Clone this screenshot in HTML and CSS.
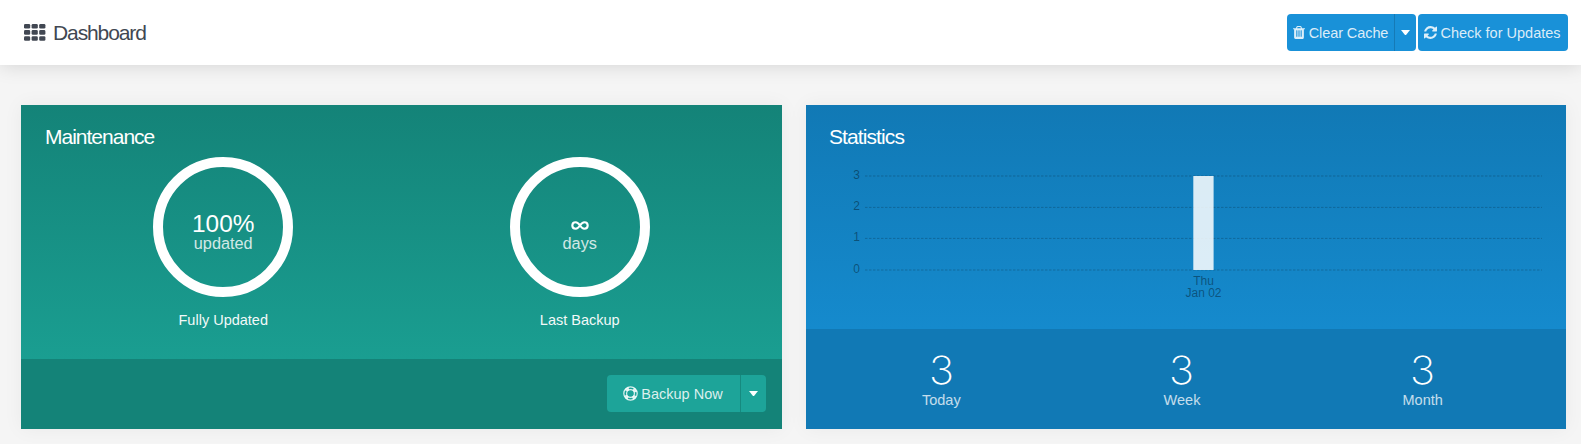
FILE: index.html
```html
<!DOCTYPE html>
<html lang="en">
<head>
<meta charset="utf-8">
<title>Dashboard</title>
<link rel="stylesheet" href="styles.css">
</head>
<body>
<header class="topbar">
  <h1 class="page-title">
    <svg class="icon-grid" width="22" height="17" viewBox="0 0 22 17"><g fill="currentColor"><rect x="0" y="0" width="6.2" height="4.6" rx="1.3"/><rect x="7.6" y="0" width="6.2" height="4.6" rx="1.3"/><rect x="15.2" y="0" width="6.2" height="4.6" rx="1.3"/><rect x="0" y="6.1" width="6.2" height="4.6" rx="1.3"/><rect x="7.6" y="6.1" width="6.2" height="4.6" rx="1.3"/><rect x="15.2" y="6.1" width="6.2" height="4.6" rx="1.3"/><rect x="0" y="12.2" width="6.2" height="4.6" rx="1.3"/><rect x="7.6" y="12.2" width="6.2" height="4.6" rx="1.3"/><rect x="15.2" y="12.2" width="6.2" height="4.6" rx="1.3"/></g></svg>
    <span>Dashboard</span>
  </h1>
  <div class="actions">
    <div class="group">
      <button class="btn btn-clear">
        <svg width="12" height="13" viewBox="0 0 1408 1536"><path fill="currentColor" d="M512 1248V544q0-32-32-32h-64q-32 0-32 32v704q0 32 32 32h64q32 0 32-32zm256 0V544q0-32-32-32h-64q-32 0-32 32v704q0 32 32 32h64q32 0 32-32zm256 0V544q0-32-32-32h-64q-32 0-32 32v704q0 32 32 32h64q32 0 32-32zM480 256h448l-48-117q-7-9-17-11H546q-10 2-17 11zm928 32v64q0 32-32 32h-96v948q0 83-47 143.500t-113 60.500H288q-66 0-113-58.500T128 1336V384H32q-32 0-32-32v-64q0-32 32-32h309l70-167q15-37 54-63t79-26h320q40 0 79 26t54 63l70 167h309q32 0 32 32z"/></svg>
        <span>Clear Cache</span>
      </button>
      <button class="btn btn-caret" aria-label="Clear cache options"><i class="caret"></i></button>
    </div>
    <button class="btn btn-check">
      <svg width="13" height="13" viewBox="0 0 1536 1536"><path fill="currentColor" d="M1511 928q0 5-1 7-64 268-268 434.500T764 1536q-146 0-282.500-55T238 1324l-129 129q-19 19-45 19t-45-19-19-45V960q0-26 19-45t45-19h448q26 0 45 19t19 45-19 45l-137 137q71 66 161 102t187 36q134 0 250-65t186-179q11-17 53-117 8-23 30-23h192q13 0 22.500 9.500t9.500 22.500zm25-800v448q0 26-19 45t-45 19h-448q-26 0-45-19t-19-45 19-45l138-138Q969 256 768 256q-134 0-250 65T332 500q-11 17-53 117-8 23-30 23H50q-13 0-22.500-9.500T18 608v-7q65-268 270-434.500T768 0q146 0 284 55.500T1297 212l130-129q19-19 45-19t45 19 19 45z"/></svg>
      <span>Check for Updates</span>
    </button>
  </div>
</header>
<main class="cards">
  <section class="card maintenance">
    <div class="card-main">
      <h2>Maintenance</h2>
      <div class="rings">
        <div class="ring-item">
          <div class="ring"><b>100%</b><span>updated</span></div>
          <p>Fully Updated</p>
        </div>
        <div class="ring-item">
          <div class="ring">
            <b><svg width="18" height="9" viewBox="0 0 18 9"><path d="M9 4.500C7.300 2 6.200 1.300 4.700 1.300C2.700 1.300 1.300 2.700 1.300 4.500S2.700 7.700 4.700 7.700C6.200 7.700 7.300 7 9 4.500C10.700 2 11.800 1.300 13.300 1.300C15.300 1.300 16.700 2.700 16.700 4.500S15.300 7.700 13.300 7.700C11.800 7.700 10.700 7 9 4.500Z" fill="none" stroke="currentColor" stroke-width="2.100"/></svg></b>
            <span>days</span>
          </div>
          <p>Last Backup</p>
        </div>
      </div>
    </div>
    <footer class="backup-bar">
      <div class="group">
        <button class="btn btn-backup">
          <svg width="15" height="15" viewBox="0 0 15 15" fill="none" stroke="currentColor"><circle cx="7.500" cy="7.500" r="6.700" stroke-width="1.200"/><circle cx="7.500" cy="7.500" r="3.900" stroke-width="1.200"/><circle cx="7.500" cy="7.500" r="5.250" stroke-width="3" stroke-dasharray="3.600 4.647" stroke-dashoffset="-2.320"/></svg>
          <span>Backup Now</span>
        </button>
        <button class="btn btn-caret" aria-label="Backup options"><i class="caret"></i></button>
      </div>
    </footer>
  </section>
  <section class="card statistics">
    <div class="card-main">
      <h2>Statistics</h2>
      <svg class="chart" width="713" height="150" viewBox="830 157 713 150">
        <g class="grid-lines"><path d="M865 176H1542M865 207.400H1542M865 238.400H1542M865 270H1542"/></g>
        <rect class="bar" x="1193.300" y="176" width="20.300" height="94"/>
        <g class="axis" text-anchor="end"><text x="860" y="179">3</text><text x="860" y="210">2</text><text x="860" y="241">1</text><text x="860" y="273">0</text></g>
        <g class="axis" text-anchor="middle"><text x="1203.500" y="285">Thu</text><text x="1203.500" y="297">Jan 02</text></g>
      </svg>
    </div>
    <footer class="totals">
      <div><b>3</b><span>Today</span></div>
      <div><b>3</b><span>Week</span></div>
      <div><b>3</b><span>Month</span></div>
    </footer>
  </section>
</main>
</body>
</html>
```

FILE: styles.css
```css
* { box-sizing: border-box; }
body {
  margin: 0;
  height: 444px;
  overflow: hidden;
  background: #f5f5f5;
  font: 14.5px/20px "Liberation Sans", Arial, sans-serif;
}
h1, h2, p { margin: 0; font-weight: 400; }
h1, h2 { font-size: 21px; line-height: 26px; letter-spacing: -1px; }
h1 { letter-spacing: -1.1px; }
b { font-weight: 400; }
svg { display: block; flex: none; }

.topbar {
  height: 65px;
  padding: 0 13px 0 24px;
  display: flex;
  align-items: center;
  justify-content: space-between;
  background: #fff;
  box-shadow: 0 0 19px rgba(0, 0, 0, .15);
}
.page-title { display: flex; align-items: center; gap: 7px; color: #414752; }
.icon-grid { margin-top: -1px; }
.actions { display: flex; gap: 2px; }
.group { display: flex; }
.btn {
  height: 37px;
  padding: 0;
  border: 0;
  border-radius: 4px;
  display: flex;
  align-items: center;
  justify-content: center;
  gap: 3px;
  font: inherit;
  white-space: nowrap;
  color: rgba(255, 255, 255, .85);
  background: #1991d8;
}
.group .btn:first-child { border-radius: 4px 0 0 4px; }
.group .btn:last-child { border-radius: 0 4px 4px 0; }
.btn-clear { width: 107px; letter-spacing: -.08px; }
.btn-clear svg { margin-right: 1px; }
.btn-check { width: 150px; padding-right: 1px; }
.actions .btn-caret { width: 22px; padding-right: 1px; border-left: 1px solid #157ab6; }
.caret {
  width: 9px;
  border: 4.500px solid transparent;
  border-top: 5px solid #fff;
  border-bottom: 0;
}

.cards { display: flex; gap: 24px; padding: 40px 15px 15px 21px; }
.card {
  height: 324px;
  width: 761px;
  display: flex;
  flex-direction: column;
  color: #fff;
  box-shadow: 0 0 19px rgba(0, 0, 0, .05);
}
.statistics { width: 760px; }
.card-main { flex: 1; padding: 19px 24px 0; }
.maintenance .card-main { background: linear-gradient(#148378, #1a9e91); }
.statistics .card-main { background: linear-gradient(#1179b5, #158acd); }
.statistics h2 { letter-spacing: -.9px; margin-left: -1px; }

.rings { display: flex; margin-top: 7px; }
.ring-item { flex: 1; display: flex; flex-direction: column; align-items: center; }
.ring {
  width: 140px;
  height: 140px;
  border: 10px solid #fff;
  border-radius: 50%;
  display: flex;
  flex-direction: column;
  align-items: center;
  padding-top: 45px;
}
.ring b { font-size: 24.4px; line-height: 24px; height: 21px; }
.ring b svg { margin-top: 9px; }
.ring span { font-size: 16.3px; line-height: 20px; opacity: .8; }
.ring-item p { margin-top: 13px; opacity: .95; }

.backup-bar {
  height: 70px;
  padding: 16px 16px 0 0;
  display: flex;
  justify-content: flex-end;
  background: #148378;
}
.backup-bar .btn { background: #1da499; }
.btn-backup { width: 133px; padding-right: 1px; }
.backup-bar .btn-caret { width: 26px; padding-right: 1px; border-left: 1px solid #168a7f; }

.chart { margin-top: 7px; }
.grid-lines { fill: none; stroke: rgba(0, 0, 0, .2); stroke-dasharray: 2.500 1.500; }
.bar { fill: #fff; opacity: .85; }
.axis { font-size: 12px; fill: rgba(0, 0, 0, .4); }

.totals {
  height: 100px;
  padding: 19px 23px 0 15px;
  display: flex;
  background: #1179b5;
}
.totals div { flex: 1; display: flex; flex-direction: column; align-items: center; }
.totals b { font: 200 39px/44px Inter, sans-serif; height: 43px; transform: scaleX(1.080); }
.totals span { opacity: .75; line-height: 18px; }
```
